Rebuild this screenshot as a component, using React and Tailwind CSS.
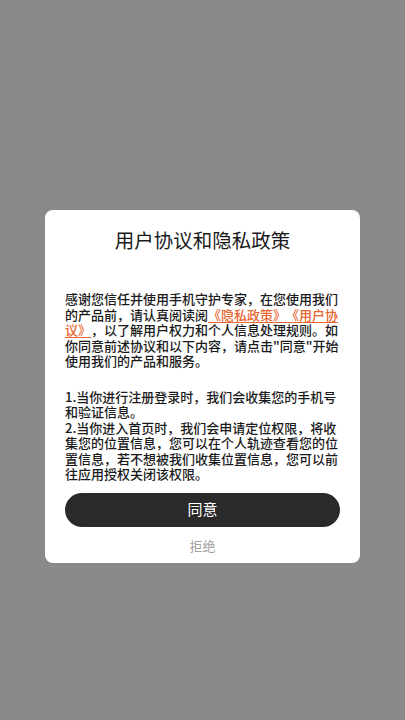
export default function App() {
  return (
    <div
      className="min-h-[720px] bg-[#8a8a8a] pt-[210px] [text-spacing-trim:space-all]"
      style={{ fontFamily: '"Noto Sans CJK SC", "Noto Sans", sans-serif' }}
    >
      <div className="mx-[45px] w-[315px] rounded-lg bg-white px-5 pt-[17px] pb-[7px]">
        <h1 className="text-center text-[19.5px] leading-[26px] font-normal text-[#1a1a1a]">
          用户协议和隐私政策
        </h1>

        <p className="mt-[38px] text-[13px] leading-[15.5px] font-medium text-[#1a1a1a]">
          感谢您信任并使用手机守护专家，在您使用我们的产品前，请认真阅读阅
          <span className="text-[#e8662f] underline underline-offset-2">《隐私政策》《用户协议》</span>
          ，以了解用户权力和个人信息处理规则。如你同意前述协议和以下内容，请点击"同意"开始使用我们的产品和服务。
        </p>

        <div className="mt-[20px] text-[13px] leading-[15.5px] font-medium text-[#1a1a1a]">
          <p>1.当你进行注册登录时，我们会收集您的手机号和验证信息。</p>
          <p>
            2.当你进入首页时，我们会申请定位权限，将收集您的位置信息，您可以在个人轨迹查看您的位置信息，若不想被我们收集位置信息，您可以前往应用授权关闭该权限。
          </p>
        </div>

        <button className="mt-[11px] h-[34px] w-full rounded-full bg-[#2a2a2a] text-[15px] text-white">
          同意
        </button>
        <button className="mt-[9px] block w-full text-center text-[13px] leading-[20px] text-[#a3a3a3]">
          拒绝
        </button>
      </div>
    </div>
  );
}
